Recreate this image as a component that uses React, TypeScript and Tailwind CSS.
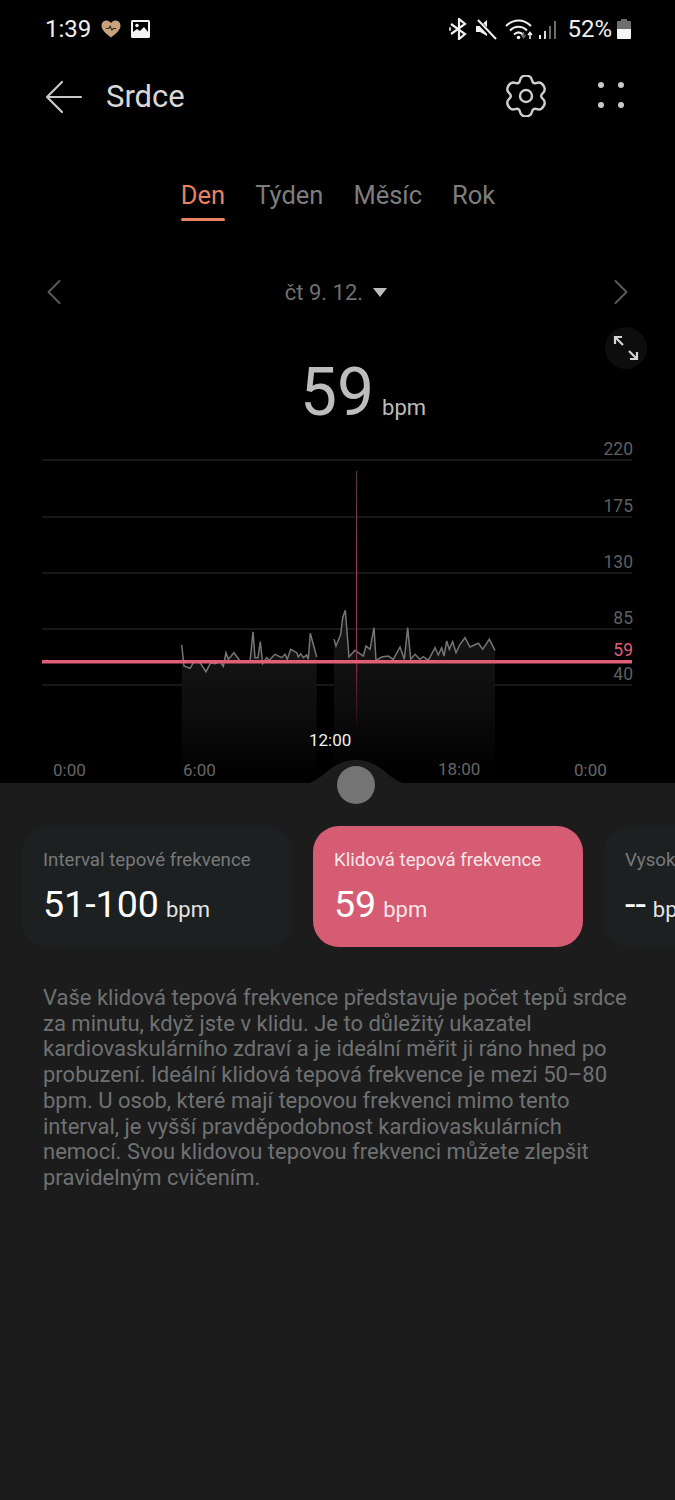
import { ChevronLeft, ChevronRight } from "lucide-react";

const FONT = "font-['Roboto',sans-serif]";

const TRACE_A = [
  [35, 162], [42, 225], [60, 232], [72, 212], [90, 215], [108, 242], [122, 215], [135, 218], [150, 212], [160, 226],
  [168, 185], [175, 205], [192, 185], [210, 210], [240, 212], [249, 122], [255, 200], [264, 200], [271, 152], [278, 218],
  [290, 200], [298, 208], [315, 190], [335, 200], [345, 190], [352, 205], [362, 175], [380, 185], [385, 198], [392, 188],
  [400, 200], [410, 192], [415, 205], [421, 127], [440, 198],
];
const TRACE_B = [
  [492, 145], [498, 165], [512, 130], [518, 80], [526, 58], [537, 198], [555, 178], [580, 195], [588, 165], [600, 175],
  [612, 110], [618, 208], [635, 198], [655, 195], [670, 205], [690, 168], [703, 205], [713, 110], [722, 205], [735, 190],
  [750, 205], [760, 197], [775, 208], [795, 170], [805, 192], [815, 170], [822, 195], [830, 150], [838, 175], [848, 152],
  [858, 185], [870, 160], [885, 140], [900, 168], [925, 157], [938, 175], [958, 145], [975, 178],
];

// trace was read off a 3x crop, so map it back to chart coordinates (chart top = 440)
const toChart = (pts: number[][]) => pts.map(([x, y]) => [170 + x / 3, 150 + y / 3]);
const line = (pts: number[][]) => pts.map(([x, y]) => `${x.toFixed(1)},${y.toFixed(1)}`).join(" ");
const area = (pts: number[][]) => `${pts[0][0]},335 ${line(pts)} ${pts[pts.length - 1][0]},335`;

const GRID = [
  { y: 19, label: "220" },
  { y: 76, label: "175" },
  { y: 132, label: "130" },
  { y: 188, label: "85" },
  { y: 244, label: "40" },
];

// six rounded lobes, smoothed through the midpoints of a star outline
function gearPath(cx: number, cy: number) {
  const pts: number[][] = [];
  for (let i = 0; i < 6; i++) {
    const a = -90 + i * 60;
    [[a - 14, 21], [a + 14, 21], [a + 30, 13.5]].forEach(([deg, r]) => {
      const rad = (deg * Math.PI) / 180;
      pts.push([cx + r * Math.cos(rad), cy + r * Math.sin(rad)]);
    });
  }
  const mid = (p: number[], q: number[]) => [(p[0] + q[0]) / 2, (p[1] + q[1]) / 2];
  const start = mid(pts[pts.length - 1], pts[0]);
  let d = `M${start[0].toFixed(2)} ${start[1].toFixed(2)}`;
  pts.forEach((p, i) => {
    const m = mid(p, pts[(i + 1) % pts.length]);
    d += `Q${p[0].toFixed(2)} ${p[1].toFixed(2)} ${m[0].toFixed(2)} ${m[1].toFixed(2)}`;
  });
  return `${d}Z`;
}

function GridLabel({ top, children, className }: { top: number; children: string; className?: string }) {
  return (
    <span className={`absolute right-[42px] text-[17.5px] leading-5 ${className ?? "text-[#5f5f5f]"}`} style={{ top }}>
      {children}
    </span>
  );
}

function AxisLabel({ left, top, children, className }: { left: number; top: number; children: string; className?: string }) {
  return (
    <span className={`absolute text-[17px] leading-5 ${className ?? "text-[#666666]"}`} style={{ left, top }}>
      {children}
    </span>
  );
}

function HeartChart() {
  const a = toChart(TRACE_A);
  const b = toChart(TRACE_B);
  return (
    <div className="relative h-[343px] w-full">
      <svg width="675" height="343" viewBox="0 0 675 343" className="absolute left-0 top-0">
        <defs>
          <linearGradient id="zone" x1="0" y1="0" x2="0" y2="1">
            <stop offset="0" stopColor="#161616" />
            <stop offset="0.55" stopColor="#0d0d0d" />
            <stop offset="1" stopColor="#000000" />
          </linearGradient>
          <linearGradient id="cursor" gradientUnits="userSpaceOnUse" x1="0" y1="30" x2="0" y2="285">
            <stop offset="0" stopColor="#4a3a3e" />
            <stop offset="0.4" stopColor="#a03a4d" />
            <stop offset="0.75" stopColor="#8c3443" />
            <stop offset="1" stopColor="#1a0a0d" />
          </linearGradient>
        </defs>
        {GRID.map((g) => (
          <line key={g.y} x1="42" x2="632" y1={g.y} y2={g.y} stroke="#303030" strokeWidth="1" />
        ))}
        <polygon points={area(a)} fill="url(#zone)" />
        <polygon points={area(b)} fill="url(#zone)" />
        <polyline points={line(a)} fill="none" stroke="#757575" strokeWidth="1.5" />
        <polyline points={line(b)} fill="none" stroke="#757575" strokeWidth="1.5" />
        <rect x="356" y="30" width="1.200" height="255" fill="url(#cursor)" />
        <rect x="42" y="219" width="590" height="3.500" fill="#df5f76" />
      </svg>
      {GRID.map((g) => (
        <GridLabel key={g.label} top={g.y - 21}>
          {g.label}
        </GridLabel>
      ))}
      <GridLabel top={199} className="text-[#df5f76]">59</GridLabel>
      <AxisLabel left={309} top={289} className="text-[#f0f0f0]">12:00</AxisLabel>
      <AxisLabel left={53} top={319}>0:00</AxisLabel>
      <AxisLabel left={183} top={319}>6:00</AxisLabel>
      <AxisLabel left={438} top={318}>18:00</AxisLabel>
      <AxisLabel left={574} top={319}>0:00</AxisLabel>
    </div>
  );
}

function StatusBar() {
  return (
    <div className="flex h-[58px] items-center justify-between pl-[45px] pr-[44px] text-[24px] text-[#f0f0f0]">
      <div className="flex items-center">
        <span>1:39</span>
        <svg width="20" height="18" viewBox="0 0 21 19" className="ml-[10px]">
          <path d="M10.5 18.5C4 13.5.5 10 .5 5.800.5 2.800 2.800.5 5.700.5c2 0 3.700 1 4.800 2.700C11.600 1.500 13.300.5 15.300.5c2.900 0 5.200 2.300 5.200 5.300 0 4.200-3.500 7.700-10 12.700z" fill="#c8a27c" />
          <path d="M5 9h3l1.500-2.500 2 4 1.500-1.500h3" fill="none" stroke="#3a2a1c" strokeWidth="1.200" />
        </svg>
        <svg width="19" height="18" viewBox="0 0 19 18" className="ml-[10px]">
          <rect width="19" height="18" rx="1.500" fill="#f4f4f4" />
          <rect x="2" y="2" width="15" height="10" fill="#000" />
          <circle cx="6" cy="5.500" r="1.700" fill="#f4f4f4" />
          <path d="M2 12l4-3 3 2 4-4 4 5v2H2z" fill="#f4f4f4" />
        </svg>
      </div>
      <div className="flex items-center">
        <svg width="20" height="22" viewBox="0 0 20 22" fill="none" stroke="#f0f0f0" strokeWidth="2.200" className="mr-[7px]">
          <path d="M2 6l14 10-6 5V1l6 5L2 16" />
          <path d="M0 11h2M1 9v4" strokeWidth="1.200" />
        </svg>
        <svg width="21" height="21" viewBox="0 0 21 21" className="mr-[8px]">
          <path d="M0 7h4l7-6v16l-7-4H0z" fill="#f0f0f0" />
          <path d="M1 1l18 19" stroke="#000" strokeWidth="4.500" />
          <path d="M2 1l18 19" stroke="#f0f0f0" strokeWidth="2" />
        </svg>
        <svg width="52" height="21" viewBox="0 0 52 21" className="mr-[10px]">
          <path d="M1 7c7.500-7.500 17.500-7.500 25 0M5 11.500c5-5 12-5 17 0M9 15.500c2.800-2.800 6.200-2.800 9 0" fill="none" stroke="#f0f0f0" strokeWidth="2" />
          <circle cx="13.500" cy="18.500" r="1.800" fill="#f0f0f0" />
          <path d="M18.500 13v5M16.500 16l2 2.500 2-2.500" fill="none" stroke="#6a6a6a" strokeWidth="1.500" />
          <path d="M25 20v-6M23 16l2-2.500 2 2.500" fill="none" stroke="#f0f0f0" strokeWidth="1.500" />
          <rect x="34" y="16" width="2" height="4" fill="#f0f0f0" />
          <rect x="39" y="12" width="2" height="8" fill="#dddddd" />
          <rect x="44" y="7" width="2" height="13" fill="#6a6a6a" />
          <rect x="49" y="2" width="2" height="18" fill="#6a6a6a" />
        </svg>
        <span>52%</span>
        <svg width="14" height="20" viewBox="0 0 14 20" className="ml-[5px]">
          <path d="M4 0h6v2h3a1 1 0 0 1 1 1v16a1 1 0 0 1-1 1H1a1 1 0 0 1-1-1V3a1 1 0 0 1 1-1h3z" fill="#6e6e6e" />
          <path d="M0 10h14v9a1 1 0 0 1-1 1H1a1 1 0 0 1-1-1z" fill="#f4f4f4" />
        </svg>
      </div>
    </div>
  );
}

function MetricCard({ title, value, active, clip }: { title: string; value: string; active?: boolean; clip?: boolean }) {
  return (
    <div
      className={`h-[121px] shrink-0 rounded-[26px] pl-[21px] pt-[22px] ${clip ? "w-[120px]" : "w-[270px]"} ${
        active ? "bg-[#d55c72]" : "bg-[#1c2021]"
      }`}
    >
      <div className={`whitespace-nowrap text-[18.7px] leading-6 ${active ? "text-[#f8e6e9]" : "text-[#77797a]"}`}>{title}</div>
      <div className="mt-[9px] flex items-baseline gap-[7px] whitespace-nowrap text-white">
        <span className="text-[37.6px] leading-[46px]">{value}</span>
        <span className={`text-[22px] ${active ? "text-[#f8e6e9]" : "text-[#e4e4e4]"}`}>bpm</span>
      </div>
    </div>
  );
}

export default function App() {
  return (
    <div className={`flex h-[1500px] w-[675px] flex-col overflow-hidden bg-[#1c1c1c] ${FONT}`}>
      <div className="h-[783px] shrink-0 bg-black">
        <StatusBar />

        <div className="flex h-[78px] items-center pl-[45px] pr-[51px]">
          <svg width="38" height="34" viewBox="0 0 38 34" fill="none" stroke="#c9c9c9" strokeWidth="2.200" strokeLinecap="round" strokeLinejoin="round">
            <path d="M36 17H2M17 2L2 17l15 15" />
          </svg>
          <span className="ml-[23px] text-[31px] text-[#d8d8d8]">Srdce</span>
          <svg width="42" height="42" viewBox="0 0 42 42" fill="none" stroke="#cfcfcf" strokeWidth="2.400" className="ml-auto mb-[2px]">
            <path d={gearPath(21, 21)} />
            <circle cx="21" cy="21" r="6" />
          </svg>
          <div className="mb-[4px] ml-[51px] grid grid-cols-2 gap-x-[14px] gap-y-[14px]">
            <span className="size-[6px] rounded-full bg-[#c9c9c9]" />
            <span className="size-[6px] rounded-full bg-[#c9c9c9]" />
            <span className="size-[6px] rounded-full bg-[#c9c9c9]" />
            <span className="size-[6px] rounded-full bg-[#c9c9c9]" />
          </div>
        </div>

        <div className="mt-[42px] flex justify-center gap-[30px] pl-[1px] text-[25.5px] leading-[34px] text-[#7d7d7d]">
          <div className="flex flex-col items-center">
            <span className="text-[#e9825f]">Den</span>
            <span className="mt-[6px] h-[3px] w-[44px] rounded-full bg-[#e9825f]" />
          </div>
          <span>Týden</span>
          <span>Měsíc</span>
          <span>Rok</span>
        </div>

        <div className="mt-[49px] flex h-[44px] items-center justify-between px-[32px]">
          <ChevronLeft size={44} strokeWidth={1.1} className="text-[#5a5a5a]" />
          <div className="flex items-center gap-[10px] pr-[3px] text-[22px] text-[#6f6f6f]">
            <span>čt 9. 12.</span>
            <span className="h-0 w-0 border-x-[7px] border-t-[9px] border-x-transparent border-t-[#bdbdbd]" />
          </div>
          <ChevronRight size={44} strokeWidth={1.1} className="text-[#5a5a5a]" />
        </div>

        <div className="relative h-[127px]">
          <span className="absolute right-[28px] top-[13px] flex size-[42px] items-center justify-center rounded-full bg-[#0d0d0d]">
            <svg width="26" height="26" viewBox="0 0 26 26" fill="none" stroke="#d4d4d4" strokeWidth="2.200">
              <path d="M2 9V2h7M2 2l8 8M24 17v7h-7M24 24l-8-8" />
            </svg>
          </span>
          <div className="flex items-baseline justify-center pl-[51px] pt-[43px] text-[#bdbdbd]">
            <span className="text-[66px] leading-[72px]">59</span>
            <span className="ml-[8px] text-[22px]">bpm</span>
          </div>
        </div>

        <HeartChart />
      </div>

      <div className="relative flex flex-1 flex-col">
        <svg width="110" height="24" viewBox="0 0 110 24" className="absolute left-[301px] top-[-23px]">
          <path d="M0 24C12 24 18 18 28 10 36 4 44 0 55 0s19 4 27 10c10 8 16 14 28 14z" fill="#1c1c1c" />
        </svg>
        <span className="absolute left-[337px] top-[-17px] size-[38px] rounded-full bg-[#747475]" />

        <div className="mt-[43px] flex gap-[21px] overflow-hidden pl-[22px]">
          <MetricCard title="Interval tepové frekvence" value="51-100" />
          <MetricCard title="Klidová tepová frekvence" value="59" active />
          <MetricCard title="Vysoká tepová frekvence" value="--" clip />
        </div>

        <p className="mt-[38px] pl-[43px] text-[22px] leading-[25.7px] whitespace-nowrap text-[#6f7172]">
          Vaše klidová tepová frekvence představuje počet tepů srdce
          <br />
          za minutu, když jste v klidu. Je to důležitý ukazatel
          <br />
          kardiovaskulárního zdraví a je ideální měřit ji ráno hned po
          <br />
          probuzení. Ideální klidová tepová frekvence je mezi 50–80
          <br />
          bpm. U osob, které mají tepovou frekvenci mimo tento
          <br />
          interval, je vyšší pravděpodobnost kardiovaskulárních
          <br />
          nemocí. Svou klidovou tepovou frekvenci můžete zlepšit
          <br />
          pravidelným cvičením.
        </p>
      </div>
    </div>
  );
}
